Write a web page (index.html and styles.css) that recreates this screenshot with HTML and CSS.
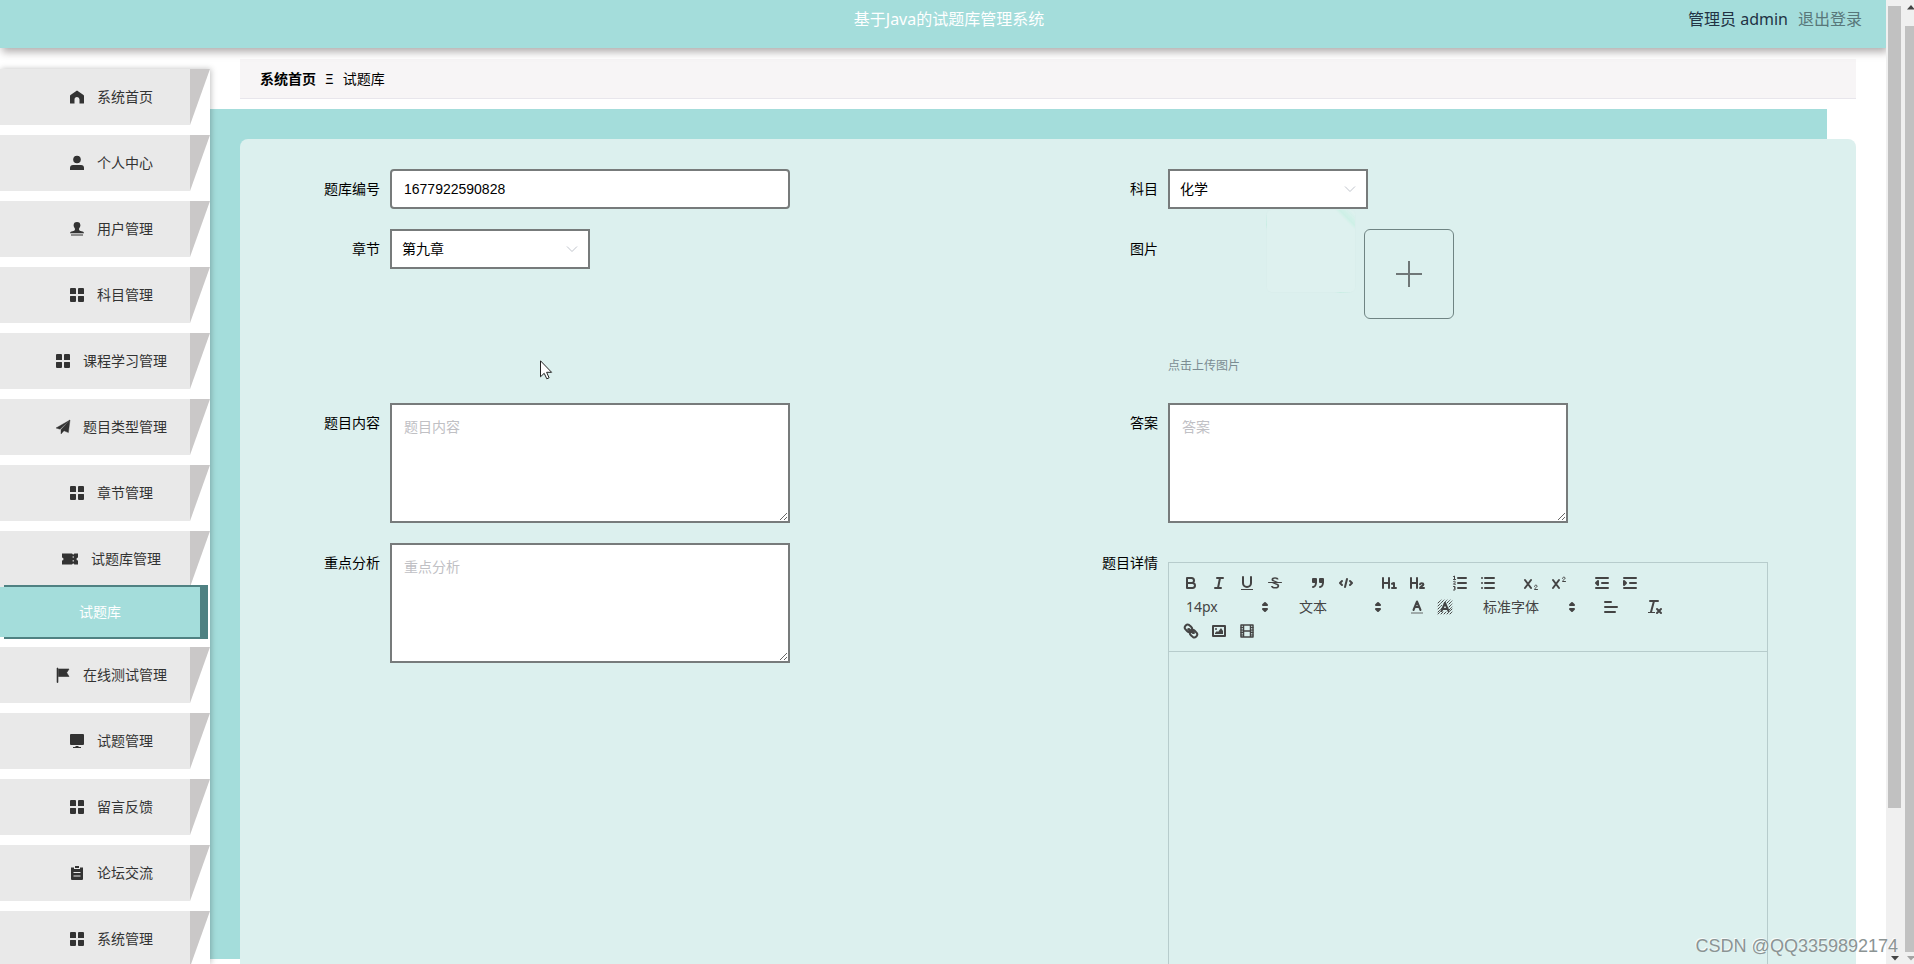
FILE: index.html
```html
<!DOCTYPE html>
<html lang="zh-CN">
<head>
<meta charset="utf-8">
<title>基于Java的试题库管理系统</title>
<link rel="stylesheet" href="styles.css">
</head>
<body>
<svg class="defs" aria-hidden="true">
  <symbol id="i-menu" viewBox="0 0 14 14"><path d="M1 0h4a1 1 0 0 1 1 1v4.500a.5.500 0 0 1-.5.500H.5a.5.500 0 0 1-.5-.5V1a1 1 0 0 1 1-1zM9 0h4a1 1 0 0 1 1 1v4.500a.5.500 0 0 1-.5.500h-5a.5.500 0 0 1-.5-.5V1a1 1 0 0 1 1-1zM.5 8h5a.5.500 0 0 1 .5.500V13a1 1 0 0 1-1 1H1a1 1 0 0 1-1-1V8.500a.5.500 0 0 1 .5-.5zM8.500 8h5a.5.500 0 0 1 .5.500V13a1 1 0 0 1-1 1H9a1 1 0 0 1-1-1V8.500a.5.500 0 0 1 .5-.5z"/></symbol>
  <symbol id="i-down" viewBox="0 0 12 12"><path d="M1 3.500l5 5 5-5" fill="none" stroke="#c0c4cc"/></symbol>
  <symbol id="i-pick" viewBox="0 0 18 18"><path class="sf" d="M7 11l2 2 2-2zM7 7l2-2 2 2z"/></symbol>
</svg>
<div class="window">
  <div class="app">
    <header class="header">
      <h1 class="title">基于Java的试题库管理系统</h1>
      <div class="account"><span>管理员 admin</span><a class="logout" href="#logout">退出登录</a></div>
    </header>
    <div class="body">
      <nav class="sidebar">
        <a class="item" href="#home"><svg viewBox="0 0 14 14"><path d="M7 .5L13.500 5a1 1 0 0 1 .5 1v7a.6.600 0 0 1-.6.600H9.500V9.500a2.500 2.500 0 0 0-5 0v4.100H.6A.6.600 0 0 1 0 13V6a1 1 0 0 1 .5-1z"/></svg><span>系统首页</span></a>
        <a class="item" href="#center"><svg viewBox="0 0 14 14"><circle cx="7" cy="3.500" r="3.800"/><path d="M0 14v-2a3 3 0 0 1 3-3h8a3 3 0 0 1 3 3v2z"/></svg><span>个人中心</span></a>
        <a class="item" href="#users"><svg viewBox="0 0 14 14"><path d="M7 0a3.400 3.400 0 0 1 3.400 3.400c0 1.700-1.300 2.400-1.400 3.600 0 1 .5 1.700 1.500 1.900l2 .5c1 .3 1.500.8 1.500 1.900H0c0-1.100.5-1.600 1.500-1.900l2-.5C4.500 8.700 5 8 5 7c-.1-1.200-1.400-1.900-1.400-3.600A3.400 3.400 0 0 1 7 0zM1 12.400h12v1.200H1z"/></svg><span>用户管理</span></a>
        <a class="item" href="#subjects"><svg><use href="#i-menu"/></svg><span>科目管理</span></a>
        <a class="item" href="#courses"><svg><use href="#i-menu"/></svg><span>课程学习管理</span></a>
        <a class="item" href="#types"><svg viewBox="0 0 14 14"><path d="M0 8L14 0 4 9.200zM5 9.600L14 0l-1.600 12.600L8 10.800 5 14z" stroke="#333" stroke-width=".4"/></svg><span>题目类型管理</span></a>
        <a class="item" href="#chapters"><svg><use href="#i-menu"/></svg><span>章节管理</span></a>
        <a class="item open" href="#bank"><svg viewBox="0 0 16 14"><path d="M0 1.500h10l1.200 1.200 1.200-1.200H16v4a1.500 1.500 0 0 0 0 3v4h-3.600l-1.200-1.200L10 12.500H0v-4a1.500 1.500 0 0 0 0-3z"/><path d="M11.200 4.200v1.600M11.200 8v1.600" stroke="#e9e9e9"/></svg><span>试题库管理</span></a>
        <div class="submenu"><a class="subitem" href="#bank-list">试题库</a></div>
        <a class="item" href="#exams"><svg viewBox="0 0 14 14"><path d="M1 0h1v14.500H1zM2.500 1H13l-2.300 3.700L13 8.500H2.500z" stroke="#333" stroke-width=".6"/></svg><span>在线测试管理</span></a>
        <a class="item" href="#questions"><svg viewBox="0 0 14 14"><path d="M1 0h12a1 1 0 0 1 1 1v9a1 1 0 0 1-1 1H1a1 1 0 0 1-1-1V1a1 1 0 0 1 1-1zM5.500 12h3v1H11v1H3v-1h2.500z"/></svg><span>试题管理</span></a>
        <a class="item" href="#messages"><svg><use href="#i-menu"/></svg><span>留言反馈</span></a>
        <a class="item" href="#forum"><svg viewBox="0 0 14 14"><path d="M1 1.500h3V3h6V1.500h3V13a1 1 0 0 1-1 1H2a1 1 0 0 1-1-1zM5 0h4v2H5z"/><path d="M3.500 6.500h7M3.500 10h7" stroke="#e9e9e9" stroke-width="1.200"/></svg><span>论坛交流</span></a>
        <a class="item" href="#system"><svg><use href="#i-menu"/></svg><span>系统管理</span></a>
      </nav>
      <main class="main">
        <div class="crumbs"><b>系统首页</b><span>Ξ</span><span>试题库</span></div>
        <div class="stage">
          <form class="panel">
            <div class="field"><label for="no">题库编号</label><input id="no" class="text" type="text" value="1677922590828"></div>
            <div class="field"><label for="subject">科目</label><div class="select"><select id="subject"><option>化学</option></select><svg><use href="#i-down"/></svg></div></div>
            <div class="field"><label for="chapter">章节</label><div class="select"><select id="chapter"><option>第九章</option></select><svg><use href="#i-down"/></svg></div></div>
            <div class="field">
              <label for="pic">图片</label>
              <div class="upload">
                <div class="upload-box">
                  <div class="ghost"></div>
                  <button id="pic" class="add" type="button" aria-label="上传图片"><svg viewBox="0 0 26 26"><path d="M13 0v26M0 13h26" fill="none" stroke="#6f7777" stroke-width="2"/></svg></button>
                </div>
                <p class="tip">点击上传图片</p>
              </div>
            </div>
            <div class="field"><label for="content">题目内容</label><textarea id="content" placeholder="题目内容"></textarea></div>
            <div class="field"><label for="answer">答案</label><textarea id="answer" placeholder="答案"></textarea></div>
            <div class="field"><label for="analysis">重点分析</label><textarea id="analysis" placeholder="重点分析"></textarea></div>
            <div class="field">
              <label for="detail">题目详情</label>
              <div class="editor">
                <div class="toolbar">
                  <span class="group">
                    <button type="button" aria-label="粗体"><svg viewBox="0 0 18 18"><path class="s" d="M5 4h4.500a2.500 2.500 0 0 1 0 5H5zM5 9h5.500a2.500 2.500 0 0 1 0 5H5z"/></svg></button>
                    <button type="button" aria-label="斜体"><svg viewBox="0 0 18 18"><path class="s" d="M7 4h6M5 14h6M8 14l2-10"/></svg></button>
                    <button type="button" aria-label="下划线"><svg viewBox="0 0 18 18"><path class="s" d="M5 3v6a4 4 0 0 0 8 0V3"/><path class="f" d="M3 15h12v1H3z"/></svg></button>
                    <button type="button" aria-label="删除线"><svg viewBox="0 0 18 18"><path class="s t" d="M15.500 8.500h-13"/><path class="f" d="M9 8a7.600 7.600 0 0 1-1.300-.4C6 7 5.500 6.500 5.500 5.500 5.500 4 7 3.300 9 3.300s3.500.7 3.500 2.200h-1.800C10.700 5 10 4.800 9 4.800s-1.700.3-1.700.8c0 .4.300.6 1.200.9L12 8zM9 9l2 .6c1.700.6 2.200 1.200 2.200 2.400 0 1.700-1.600 2.600-4 2.600s-4.200-.9-4.200-2.600h1.800c0 .7.900 1.100 2.400 1.100 1.400 0 2.200-.4 2.200-1.100 0-.5-.3-.8-1.400-1.200L6 9z"/></svg></button>
                  </span>
                  <span class="group">
                    <button type="button" aria-label="引用"><svg viewBox="0 0 18 18"><path class="sf" d="M4 5h3v3H4zM11 5h3v3h-3z"/><path class="s" d="M7 8c0 4-1 4.500-3 5M14 8c0 4-1 4.500-3 5"/></svg></button>
                    <button type="button" aria-label="代码"><svg viewBox="0 0 18 18"><path class="s" d="M5 7L3 9l2 2M13 7l2 2-2 2M10 5l-2 8"/></svg></button>
                  </span>
                  <span class="group">
                    <button type="button" aria-label="标题一"><svg viewBox="0 0 18 18"><path class="s" d="M3 4v10M9 4v10M3 9h6M12 9.800l2-.8v5M12 14h4"/></svg></button>
                    <button type="button" aria-label="标题二"><svg viewBox="0 0 18 18"><path class="s" d="M3 4v10M9 4v10M3 9h6M12 10.300c.3-1.400 3.400-1.600 3.400.3 0 1.200-3.400 1.900-3.400 3.400h4"/></svg></button>
                  </span>
                  <span class="group">
                    <button type="button" aria-label="有序列表"><svg viewBox="0 0 18 18"><path class="s" d="M7 4h8M7 9h8M7 14h8"/><path class="s t" d="M2.500 2.500l1-.5v3.500M2.500 5.500h2M2.600 7.500c1-.8 2 0 1.600.8L2.500 10.200h2M2.500 12.500h1.500v1.500H3 4v2H2.500"/></svg></button>
                    <button type="button" aria-label="无序列表"><svg viewBox="0 0 18 18"><path class="s" d="M6 4h9M6 9h9M6 14h9M3 4h0M3 9h0M3 14h0"/></svg></button>
                  </span>
                  <span class="group">
                    <button type="button" aria-label="下标"><svg viewBox="0 0 18 18"><path class="s" d="M3 6l6 8M9 6l-6 8"/><path class="s t" d="M12.500 12.300c0-1.700 3-1.500 2.500.2-.3 1-2.500 1.700-2.500 3H15.500"/></svg></button>
                    <button type="button" aria-label="上标"><svg viewBox="0 0 18 18"><path class="s" d="M3 6l6 8M9 6l-6 8"/><path class="s t" d="M12.500 4.300c0-1.700 3-1.500 2.500.2-.3 1-2.500 1.700-2.500 3H15.500"/></svg></button>
                  </span>
                  <span class="group">
                    <button type="button" aria-label="减少缩进"><svg viewBox="0 0 18 18"><path class="s" d="M3 14h12M3 4h12M9 9h6"/><path class="sf" d="M5 7v4L3 9z"/></svg></button>
                    <button type="button" aria-label="增加缩进"><svg viewBox="0 0 18 18"><path class="s" d="M3 14h12M3 4h12M9 9h6"/><path class="sf" d="M3 7v4l2-2z"/></svg></button>
                  </span>
                  <span class="group pick"><select aria-label="字号"><option>14px</option></select><svg><use href="#i-pick"/></svg></span>
                  <span class="group pick"><select aria-label="段落"><option>文本</option></select><svg><use href="#i-pick"/></svg></span>
                  <span class="group">
                    <button type="button" aria-label="文字颜色"><svg viewBox="0 0 18 18"><path class="s" d="M5.500 12L9 3.500 12.500 12M6.800 9h4.400"/><path d="M3 15h12" stroke="#444" stroke-opacity=".4" stroke-width="2"/></svg></button>
                    <button type="button" aria-label="背景颜色"><svg viewBox="0 0 18 18"><path class="s t" stroke-dasharray="1 1" d="M2 5l3-3M2 8l6-6M2 11l4-4M8 5l3-3M2 14l4-4M11 5l3-3M2 16l3-3M13 6l3-3M5 16l2-2M13 9l3-3M8 16l2-2M13 12l3-3M11 16l5-5M14 16l2-2"/><path class="s" d="M5.500 13L9 5l3.500 8M6.800 11h4.400"/></svg></button>
                  </span>
                  <span class="group pick wide"><select aria-label="字体"><option>标准字体</option></select><svg><use href="#i-pick"/></svg></span>
                  <span class="group"><button type="button" aria-label="对齐"><svg viewBox="0 0 18 18"><path class="s" d="M3 9h12M3 14h10M3 4h6" /></svg></button></span>
                  <span class="group"><button type="button" aria-label="清除格式"><svg viewBox="0 0 18 18"><path class="s" d="M5 3h8M6 14L9 3M12 11l4 4M16 11l-4 4"/><path class="f" d="M3 14h7v1H3z"/></svg></button></span>
                  <span class="group">
                    <button type="button" aria-label="链接"><svg viewBox="0 0 18 18"><path class="s" d="M7 7l4 4M8.900 4.600a3.500 3.500 0 0 1 .4 4.800l-.6.200-2.500-2.500M8.900 4.600L7 2.900C4.900 1.400 1.600 4.600 3.100 6.900l2.200 2.400c1 1 2.600 1.200 3.900.5M9.100 13.500a3.500 3.500 0 0 1-.3-4.800l.6-.2 2.500 2.500M9.100 13.500l1.900 1.600c2.100 1.500 5.400-1.700 3.900-4l-2.200-2.400c-1-1-2.600-1.200-3.900-.5"/></svg></button>
                    <button type="button" aria-label="图片"><svg viewBox="0 0 18 18"><path class="s" d="M3 4h12v10H3z"/><circle class="f" cx="6" cy="7" r="1"/><path class="f" d="M5 12v-1l2-2 1 1 3-4 2 3v3z"/></svg></button>
                    <button type="button" aria-label="视频"><svg viewBox="0 0 18 18"><path class="s m" d="M3 3h12v12H3zM5.500 3v12M12.500 3v12M5 9h8"/><path class="s t" d="M3 5.500h2M3 8h2M3 10.500h2M3 13h2M13 5.500h2M13 8h2M13 10.500h2M13 13h2"/></svg></button>
                  </span>
                </div>
                <textarea id="detail" class="doc"></textarea>
              </div>
            </div>
          </form>
        </div>
      </main>
    </div>
  </div>
  <div class="bar inner" aria-hidden="true"><i class="thumb"></i><svg viewBox="0 0 8 5"><path d="M0 0h8L4 4.500z"/></svg></div>
  <div class="bar outer" aria-hidden="true"><svg viewBox="0 0 8 5"><path d="M0 4.500h8L4 0z"/></svg><i class="thumb"></i><svg class="off" viewBox="0 0 8 5"><path d="M0 0h8L4 4.500z"/></svg></div>
</div>
<svg class="cursor" viewBox="0 0 13 20" aria-hidden="true"><path d="M.5.800v16l3.700-3.500 2.600 5.500 2.300-1-2.500-5.500h5z" fill="#fff" stroke="#222"/></svg>
<div class="watermark">CSDN @QQ3359892174</div>
</body>
</html>
```
FILE: styles.css
```css
* { box-sizing: border-box; }

body {
  margin: 0;
  height: 100vh;
  overflow: hidden;
  background: #fff;
  color: #000;
  font: 14px/20px "Noto Sans", "Noto Sans CJK SC", sans-serif;
}
a { color: inherit; text-decoration: none; }
button, select { font: inherit; color: inherit; border: 0; background: none; padding: 0; appearance: none; }
.defs { position: absolute; width: 0; height: 0; }

.window { display: flex; height: 100vh; }
.app { flex: 1; min-width: 0; display: flex; flex-direction: column; overflow: hidden; }

.header {
  position: relative;
  z-index: 3;
  flex: none;
  display: grid;
  grid-template-columns: 1fr auto 1fr;
  height: 48px;
  padding: 8px 24px 0 36px;
  background: #a4dddb;
  box-shadow: 2px 4px 8px rgba(60, 50, 50, .4);
  font-size: 16px;
  line-height: 22px;
}
.title { grid-column: 2; margin: 0; font-size: 16px; font-weight: 400; color: #fff; }
.account { display: flex; justify-content: flex-end; gap: 10px; color: #234; }
.logout { color: #58777a; }

.body { flex: 1; min-height: 0; display: flex; }
.sidebar {
  position: relative;
  z-index: 2;
  flex: none;
  width: 210px;
  margin-top: 21px;
  background: #fff;
  box-shadow: 1px 0 6px rgba(0, 0, 0, .25);
}
.item {
  display: flex;
  align-items: center;
  justify-content: center;
  gap: 13px;
  height: 56px;
  margin-bottom: 10px;
  padding-left: 13px;
  color: #333;
  background: linear-gradient(#e9e9e9, #e9e9e9) 0 0 / 190px 100% no-repeat, #cac8c8;
  clip-path: polygon(0 0, 100% 0, 190px 100%, 0 100%);
}
.item svg { width: 14px; height: 14px; fill: #333; overflow: visible; }
.open { margin-bottom: 0; }
.open svg { width: 16px; }
.submenu { margin: -2px 2px 8px 4px; padding: 2px 8px 2px 0; background: #4f8182; position: relative; }
.subitem { display: block; margin-left: -4px; background: #a4dddb; color: #fff; text-align: center; line-height: 50px; }

.main { flex: 1; min-width: 0; display: flex; flex-direction: column; padding: 11px 30px 0 0; }
.crumbs {
  flex: none;
  display: flex;
  align-items: center;
  gap: 9px;
  height: 40px;
  margin: 0 0 10px 30px;
  padding-left: 20px;
  background: #f7f5f6;
  border-bottom: 1px solid #e8e6ec;
}
.stage { flex: 1; min-height: 0; position: relative; padding: 30px 0 0 30px; }
.stage::before { content: ""; position: absolute; inset: 0 29px 5px 0; background: #a4dddb; }
.panel {
  position: relative;
  display: grid;
  grid-template-columns: 1fr 1fr;
  row-gap: 20px;
  padding: 30px;
  border-radius: 8px;
  background: #dcf0ee;
}
.field { display: flex; align-items: flex-start; }
.field > label { flex: none; width: 120px; padding-right: 10px; text-align: right; line-height: 40px; }
.text, .select select, .field > textarea { border: 2px solid #777b7b; background: #fff; color: #000; }
.text { width: 400px; height: 40px; border-radius: 4px; padding: 0 12px; font: 14px "Liberation Sans", sans-serif; }
.select { position: relative; width: 200px; }
.select select { display: block; width: 100%; height: 40px; padding: 0 10px; }
.select svg { position: absolute; right: 12px; top: 14px; width: 12px; height: 12px; pointer-events: none; }
textarea { font: inherit; }
.field > textarea { display: block; width: 400px; height: 120px; padding: 12px; }
textarea::placeholder { color: #c0c0c4; }

.upload-box { position: relative; margin-left: 196px; width: 90px; }
.add {
  display: grid;
  place-items: center;
  width: 90px;
  height: 90px;
  border: 1px solid #6f8483;
  border-radius: 6px;
}
.add svg { width: 26px; height: 26px; }
.ghost {
  position: absolute;
  left: -98px;
  top: -20px;
  width: 90px;
  height: 84px;
  border-radius: 6px;
  background: linear-gradient(45deg, transparent 88%, #cdf0e6 91%, transparent 98%) rgba(255, 255, 255, .08);
  border: 1px solid rgba(0, 80, 80, .02);
}
.tip { margin: 37px 0 7px; font-size: 12px; color: #7b8c92; }

.editor { width: 600px; margin-top: 19px; border: 1px solid #b7cccc; }
.toolbar { display: flex; flex-wrap: wrap; padding: 8px; border-bottom: 1px solid #b7cccc; color: #444; }
.group { display: flex; height: 24px; margin-right: 15px; }
.group button { width: 28px; height: 24px; padding: 3px 5px; }
.group svg { display: block; width: 18px; height: 18px; }
.pick { position: relative; width: 98px; }
.wide { width: 108px; }
.pick select { width: 100%; padding-left: 9px; }
.pick svg { position: absolute; right: 1px; top: 3px; pointer-events: none; }
.s { fill: none; stroke: #444; stroke-width: 2; stroke-linecap: round; stroke-linejoin: round; }
.t { stroke-width: 1; }
.m { stroke-width: 1.5; }
.f { fill: #444; }
.sf { fill: #444; stroke: #444; stroke-width: 2; stroke-linejoin: round; }
.doc { display: block; width: 100%; height: 400px; padding: 12px 15px; border: 0; background: none; resize: none; }

.bar { flex: none; display: flex; flex-direction: column; align-items: center; background: #f0f0f0; }
.bar svg { flex: none; width: 8px; height: 5px; fill: #444; }
.thumb { background: #c1c1c1; }
.inner { width: 19px; padding: 6px 4px 3px 2px; justify-content: space-between; }
.inner .thumb { width: 13px; height: 84%; }
.outer { width: 9px; padding: 5px 0 3px; gap: 4px; align-items: flex-start; overflow: hidden; }
.outer svg { margin-left: 2px; }
.outer .thumb { width: 9px; flex: 1; margin-top: 12px; }
.outer .off { fill: #a3a3a3; }

.cursor { position: absolute; left: 540px; top: 360px; width: 13px; height: 20px; z-index: 4; }
.watermark {
  position: absolute;
  right: 16px;
  bottom: 6px;
  z-index: 4;
  font: 18px/24px "Liberation Sans", sans-serif;
  color: #8b9494;
  text-shadow: -1px -1px 0 rgba(255, 255, 255, .8);
}
```
